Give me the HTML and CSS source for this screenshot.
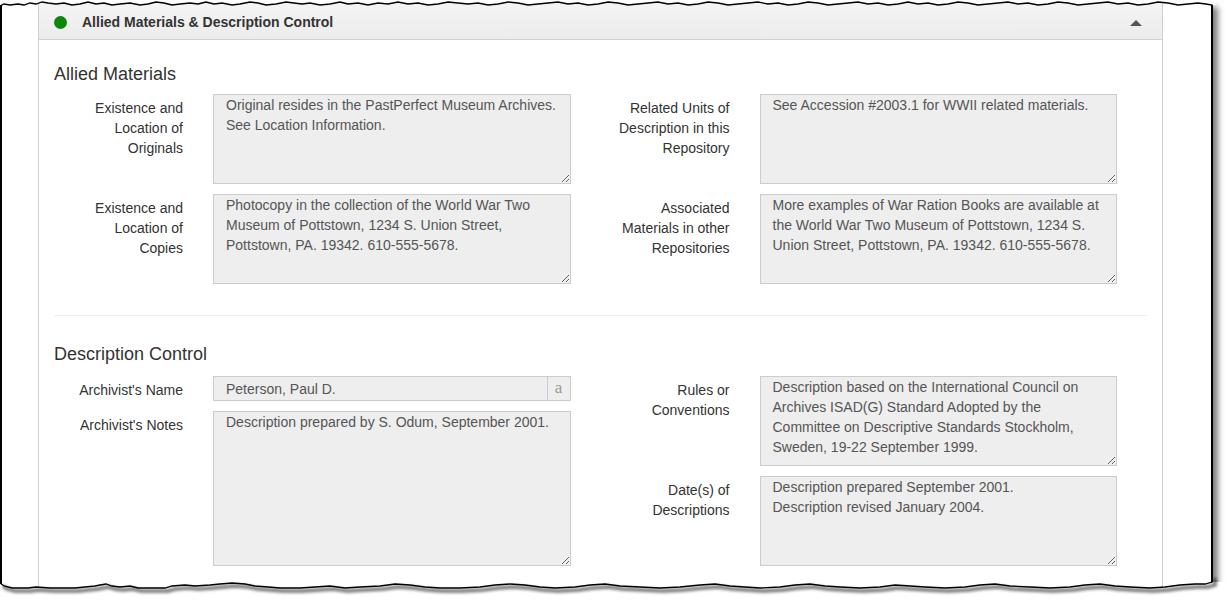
FILE: index.html
```html
<!DOCTYPE html>
<html>
<head>
<meta charset="utf-8">
<link rel="stylesheet" href="styles.css">
</head>
<body>
<div class="page">
  <div class="sheet">
    <div class="panel">
      <div class="panel-heading">
        <span class="status-dot"></span>
        <span class="panel-title">Allied Materials &amp; Description Control</span>
        <span class="caret-up"></span>
      </div>
      <div class="panel-body">
        <h4 class="section-title">Allied Materials</h4>
        <div class="cols">
          <div class="col">
            <div class="form-group">
              <label class="control-label">Existence and<br>Location of<br>Originals</label>
              <textarea class="form-control h90" readonly>Original resides in the PastPerfect Museum Archives.
See Location Information.</textarea>
            </div>
            <div class="form-group">
              <label class="control-label">Existence and<br>Location of<br>Copies</label>
              <textarea class="form-control h90" readonly>Photocopy in the collection of the World War Two
Museum of Pottstown, 1234 S. Union Street,
Pottstown, PA. 19342. 610-555-5678.</textarea>
            </div>
          </div>
          <div class="col">
            <div class="form-group">
              <label class="control-label">Related Units of<br>Description in this<br>Repository</label>
              <textarea class="form-control h90" readonly>See Accession #2003.1 for WWII related materials.</textarea>
            </div>
            <div class="form-group shift1">
              <label class="control-label">Associated<br>Materials in other<br>Repositories</label>
              <textarea class="form-control h90" readonly>More examples of War Ration Books are available at
the World War Two Museum of Pottstown, 1234 S.
Union Street, Pottstown, PA. 19342. 610-555-5678.</textarea>
            </div>
          </div>
        </div>

        <hr class="divider">

        <h4 class="section-title second">Description Control</h4>
        <div class="cols">
          <div class="col">
            <div class="form-group">
              <label class="control-label">Archivist's Name</label>
              <div class="input-group">
                <input class="form-input" type="text" value="Peterson, Paul D." readonly>
                <span class="addon">a</span>
              </div>
            </div>
            <div class="form-group">
              <label class="control-label">Archivist's Notes</label>
              <textarea class="form-control h155" readonly>Description prepared by S. Odum, September 2001.</textarea>
            </div>
          </div>
          <div class="col">
            <div class="form-group">
              <label class="control-label">Rules or<br>Conventions</label>
              <textarea class="form-control h90" readonly>Description based on the International Council on
Archives ISAD(G) Standard Adopted by the
Committee on Descriptive Standards Stockholm,
Sweden, 19-22 September 1999.</textarea>
            </div>
            <div class="form-group">
              <label class="control-label">Date(s) of<br>Descriptions</label>
              <textarea class="form-control h90" readonly>Description prepared September 2001.
Description revised January 2004.</textarea>
            </div>
          </div>
        </div>
      </div>
    </div>
  </div>

  <svg class="edge edge-top" width="1216" height="12" viewBox="0 0 1216 12">
    <polygon fill="#fff" points="0,0 1216,0 1216,5 1212,5 1206,4 1198,3 1188,4 1178,5 1168,3 1158,2 1148,4 1138,5 1128,3 1118,4 1108,2 1098,3 1088,4 1078,5 1068,3 1058,2 1048,4 1038,5 1028,3 1018,4 1008,2 998,3 988,4 978,5 968,3 958,2 948,4 938,5 928,3 918,4 908,2 898,4 888,5 878,3 868,4 858,2 848,3 838,4 828,5 818,3 808,2 798,4 788,5 778,3 768,4 758,2 748,3 738,4 728,5 718,3 708,2 698,4 688,5 678,3 668,4 658,2 648,3 638,4 628,5 618,3 608,2 598,4 588,5 578,3 568,4 558,2 548,3 538,4 528,5 518,3 508,2 498,4 488,5 478,3 468,4 458,3 448,2 438,4 428,5 418,3 408,4 398,2 388,4 378,3 368,5 358,3 348,4 340,2 330,4 320,5 310,3 302,4 294,3 286,2 276,4 266,5 258,3 250,2 240,4 232,5 222,3 214,4 206,2 198,4 190,3 180,4 172,5 164,3 156,2 148,4 140,5 130,3 120,4 112,5 104,3 96,4 88,2 80,4 72,5 64,3 56,4 48,3 42,2 36,4 30,3 24,5 18,4 10,5 4,4 0,6"/>
    <polyline fill="none" stroke="#000" stroke-width="1.3" points="0,6 4,4 10,5 18,4 24,5 30,3 36,4 42,2 48,3 56,4 64,3 72,5 80,4 88,2 96,4 104,3 112,5 120,4 130,3 140,5 148,4 156,2 164,3 172,5 180,4 190,3 198,4 206,2 214,4 222,3 232,5 240,4 250,2 258,3 266,5 276,4 286,2 294,3 302,4 310,3 320,5 330,4 340,2 348,4 358,3 368,5 378,3 388,4 398,2 408,4 418,3 428,5 438,4 448,2 458,3 468,4 478,3 488,5 498,4 508,2 518,3 528,5 538,4 548,3 558,2 568,4 578,3 588,5 598,4 608,2 618,3 628,5 638,4 648,3 658,2 668,4 678,3 688,5 698,4 708,2 718,3 728,5 738,4 748,3 758,2 768,4 778,3 788,5 798,4 808,2 818,3 828,5 838,4 848,3 858,2 868,4 878,3 888,5 898,4 908,2 918,4 928,3 938,5 948,4 958,2 968,3 978,5 988,4 998,3 1008,2 1018,4 1028,3 1038,5 1048,4 1058,2 1068,3 1078,5 1088,4 1098,3 1108,2 1118,4 1128,3 1138,5 1148,4 1158,2 1168,3 1178,5 1188,4 1198,3 1206,4 1212,5 1212,12"/>
  </svg>

  <svg class="edge edge-bottom" width="1229" height="30" viewBox="0 0 1229 30">
    <defs>
      <filter id="blur" x="-5%" y="-100%" width="110%" height="300%">
        <feGaussianBlur stdDeviation="1.8"/>
      </filter>
    </defs>
    <polygon fill="#fff" points="0,8 4,11 12,13 28,13 36,12 50,13 75,13 85,12 95,11 100,10 106,9 112,11 120,12 130,11 138,13 165,13 172,11 185,10 195,11 210,10 220,9 232,8 245,9 255,11 268,12 280,13 300,13 315,12 330,11 345,13 360,12 380,11 395,9 410,10 425,12 440,13 460,13 480,12 495,10 510,9 525,10 540,12 555,13 575,12 590,10 605,9 620,11 640,12 660,13 680,12 700,10 715,9 730,11 745,12 760,13 780,12 795,10 810,9 825,11 840,12 860,13 880,12 895,10 910,11 925,12 945,13 965,12 980,10 995,9 1010,11 1030,12 1050,13 1070,12 1085,10 1100,9 1115,11 1130,12 1150,13 1165,12 1180,10 1195,9 1205,9 1212,7 1229,7 1229,30 0,30"/>
    <polyline fill="none" stroke="#000" stroke-opacity="0.55" stroke-width="3.5" filter="url(#blur)" transform="translate(3,3)" points="0,8 4,11 12,13 28,13 36,12 50,13 75,13 85,12 95,11 100,10 106,9 112,11 120,12 130,11 138,13 165,13 172,11 185,10 195,11 210,10 220,9 232,8 245,9 255,11 268,12 280,13 300,13 315,12 330,11 345,13 360,12 380,11 395,9 410,10 425,12 440,13 460,13 480,12 495,10 510,9 525,10 540,12 555,13 575,12 590,10 605,9 620,11 640,12 660,13 680,12 700,10 715,9 730,11 745,12 760,13 780,12 795,10 810,9 825,11 840,12 860,13 880,12 895,10 910,11 925,12 945,13 965,12 980,10 995,9 1010,11 1030,12 1050,13 1070,12 1085,10 1100,9 1115,11 1130,12 1150,13 1165,12 1180,10 1195,9 1205,9 1212,7 1212,0"/>
    <polyline fill="none" stroke="#000" stroke-width="1.3" points="0,0 0,8 4,11 12,13 28,13 36,12 50,13 75,13 85,12 95,11 100,10 106,9 112,11 120,12 130,11 138,13 165,13 172,11 185,10 195,11 210,10 220,9 232,8 245,9 255,11 268,12 280,13 300,13 315,12 330,11 345,13 360,12 380,11 395,9 410,10 425,12 440,13 460,13 480,12 495,10 510,9 525,10 540,12 555,13 575,12 590,10 605,9 620,11 640,12 660,13 680,12 700,10 715,9 730,11 745,12 760,13 780,12 795,10 810,9 825,11 840,12 860,13 880,12 895,10 910,11 925,12 945,13 965,12 980,10 995,9 1010,11 1030,12 1050,13 1070,12 1085,10 1100,9 1115,11 1130,12 1150,13 1165,12 1180,10 1195,9 1205,9 1212,7 1212,0"/>
  </svg>
</div>
</body>
</html>
```

FILE: styles.css
```css
* { box-sizing: border-box; }

html, body {
  margin: 0;
  padding: 0;
  background: #fff;
}

body {
  font-family: "Liberation Sans", Arial, sans-serif;
  font-size: 14px;
  line-height: 20px;
  color: #333;
}

.page {
  position: relative;
  width: 1229px;
  height: 605px;
  overflow: hidden;
  background: #fff;
}

.sheet {
  margin-top: 3px;
  width: 1213px;
  height: 590px;
  border-left: 2px solid #000;
  border-right: 2px solid #000;
  padding-left: 36px;
  padding-right: 48px;
  overflow: hidden;
  background: #fff;
  box-shadow: 5px 4px 6px rgba(0, 0, 0, 0.5);
}

.panel {
  width: 1125px;
  height: 700px;
  border: 1px solid #cfcfcf;
  border-top: 0;
  background: #fff;
}

.panel-heading {
  display: flex;
  align-items: center;
  height: 37px;
  padding: 0 20px 0 15px;
  background: linear-gradient(#f4f4f4, #ececec);
  border-bottom: 1px solid #d2d2d2;
}

.status-dot {
  width: 13px;
  height: 13px;
  border-radius: 50%;
  background: #0b870b;
  margin-right: 15px;
  margin-top: 2px;
}

.panel-title {
  font-weight: bold;
  font-size: 14px;
  color: #333;
  margin-top: 2px;
}

.caret-up {
  margin-left: auto;
  width: 0;
  height: 0;
  border-left: 6px solid transparent;
  border-right: 6px solid transparent;
  border-bottom: 6px solid #555;
  margin-top: 3px;
}

.panel-body {
  padding: 15px;
}

.section-title {
  margin: 9px 0 10px;
  font-size: 18px;
  font-weight: normal;
  line-height: 20px;
  color: #333;
}

.section-title.second {
  margin: 0 0 12px;
}

.divider {
  margin: 31px 0 28px;
  border: 0;
  border-top: 1px solid #eee;
}

.cols {
  display: grid;
  grid-template-columns: 1fr 1fr;
  column-gap: 30px;
  padding-right: 30px;
}

.form-group {
  display: grid;
  grid-template-columns: 129px 1fr;
  column-gap: 30px;
  margin-bottom: 10px;
}

.form-group:last-child {
  margin-bottom: 0;
}

.shift1 {
  margin-top: 1px;
}

.control-label {
  text-align: right;
  padding-top: 4px;
  color: #333;
}

.form-control {
  display: block;
  width: 100%;
  margin: 0;
  padding: 0 6px 0 12px;
  font-family: "Liberation Sans", Arial, sans-serif;
  font-size: 14px;
  line-height: 20px;
  color: #555;
  background: #eee;
  border: 1px solid #ccc;
  border-radius: 0;
  resize: vertical;
  overflow: hidden;
}

.h90 { height: 90px; }
.h155 { height: 155px; }

.input-group {
  display: flex;
  height: 25px;
  border: 1px solid #ccc;
  background: #eee;
}

.form-input {
  flex: 1;
  min-width: 0;
  margin: 0;
  padding: 0 12px;
  border: 0;
  background: #eee;
  font-family: "Liberation Sans", Arial, sans-serif;
  font-size: 14px;
  line-height: 20px;
  color: #555;
  outline: none;
}

.addon {
  width: 23px;
  border-left: 1px solid #ccc;
  text-align: center;
  font-family: "Liberation Serif", "Times New Roman", serif;
  font-size: 17px;
  line-height: 21px;
  color: #999;
}

.edge {
  position: absolute;
  left: 0;
  display: block;
}

.edge-top {
  top: 0;
}

.edge-bottom {
  top: 575px;
}
```
